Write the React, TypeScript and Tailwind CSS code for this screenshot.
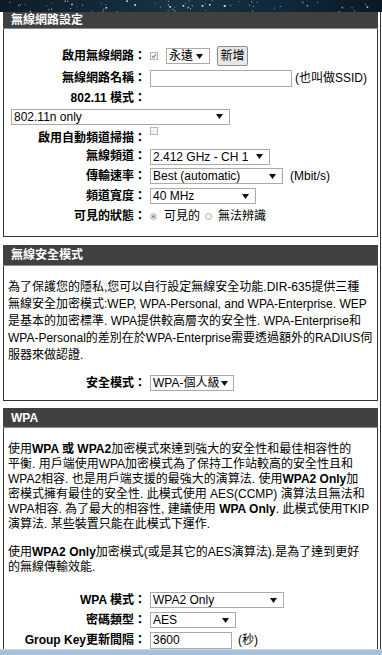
import React from "react";

function rand(seed: number) {
  let s = seed;
  return () => {
    s = (s * 9301 + 49297) % 233280;
    return s / 233280;
  };
}

function Banner() {
  const r = rand(7);
  const dots = Array.from({ length: 70 }, () => ({
    x: r() * 382,
    y: r() * 12,
    s: r() < 0.2 ? 1.6 : 0.9,
    o: 0.4 + r() * 0.6,
  }));
  return (
    <svg width="382" height="12" viewBox="0 0 382 12" className="block">
      <defs>
        <linearGradient id="sky" x1="0" x2="1" y1="0" y2="0">
          <stop offset="0" stopColor="#0c1c27" />
          <stop offset="0.45" stopColor="#173341" />
          <stop offset="0.75" stopColor="#10283a" />
          <stop offset="1" stopColor="#0b1822" />
        </linearGradient>
      </defs>
      <rect width="382" height="12" fill="url(#sky)" />
      {dots.map((d, i) => (
        <rect key={i} x={d.x} y={d.y} width={d.s} height={d.s} fill="#ffffff" opacity={d.o} />
      ))}
    </svg>
  );
}

function Arrow() {
  return (
    <svg width="7" height="5" viewBox="0 0 7 5" className="shrink-0">
      <path d="M0 0h7L3.5 5z" fill="#111" />
    </svg>
  );
}

function Select({
  className,
  tight,
  children,
}: {
  className: string;
  tight?: boolean;
  children: React.ReactNode;
}) {
  return (
    <div
      className={`flex h-[16px] items-center justify-between border border-[#a9a9a9] bg-white pl-[2px] text-[12px] leading-[14px] ${
        tight ? "pr-[5px]" : "pr-[6px]"
      } ${className}`}
    >
      <span className="whitespace-nowrap">{children}</span>
      <Arrow />
    </div>
  );
}

function Row({
  label,
  className,
  children,
}: {
  label: React.ReactNode;
  className: string;
  children?: React.ReactNode;
}) {
  return (
    <div className={`flex items-center ${className}`}>
      <div className="w-[142px] shrink-0 whitespace-nowrap text-right text-[12px] font-bold leading-[15px]">{label}</div>
      <div className="ml-[4px] flex items-center text-[12px] leading-[15px]">{children}</div>
    </div>
  );
}

function Header({ className, children }: { className: string; children: React.ReactNode }) {
  return (
    <div
      className={`flex items-center border-b border-[#8c8c8c] bg-[#404040] pl-[8px] text-[12px] font-bold text-white ${className}`}
    >
      <span className="whitespace-nowrap leading-[12px]">{children}</span>
    </div>
  );
}

function Line({ children }: { children: React.ReactNode }) {
  return <div className="whitespace-nowrap text-[12px] leading-[15px]">{children}</div>;
}

function Line17({ children }: { children: React.ReactNode }) {
  return <div className="whitespace-nowrap text-[12px] leading-[17px]">{children}</div>;
}

function Checkbox({ checked }: { checked?: boolean }) {
  return (
    <span className="flex h-[8px] w-[8px] items-center justify-center border border-[#b8b8b8] bg-[#f3f3f3]">
      {checked && (
        <svg width="6" height="6" viewBox="0 0 6 6">
          <path d="M1 3.2L2.4 4.6L5 1.4" stroke="#8a8a8a" strokeWidth="1.2" fill="none" />
        </svg>
      )}
    </span>
  );
}

function Radio({ checked }: { checked?: boolean }) {
  return (
    <span className="flex h-[7px] w-[7px] items-center justify-center rounded-full border border-[#b0b0b0] bg-[#f3f3f3]">
      {checked && <span className="h-[3px] w-[3px] rounded-full bg-[#8a8a8a]" />}
    </span>
  );
}

export default function App() {
  return (
    <div className="relative h-[655px] w-[382px] overflow-hidden bg-white font-['Liberation_Sans','Noto_Sans_CJK_TC',sans-serif] text-black">
      <Banner />
      <div className="flex">
        <div className="ml-[3px] w-[375px] shrink-0">
          {/* Section 1 */}
          <Header className="h-[17px]">無線網路設定</Header>
          <div className="border-x border-b border-[#333] pt-[15px] pb-[9px]">
            <Row label="啟用無線網路：" className="h-[24px]">
              <Checkbox checked />
              <Select className="ml-[8px] w-[44px]">永遠</Select>
              <button className="ml-[7px] flex h-[20px] w-[31px] items-center justify-center rounded-[2px] border border-[#8f8f8f] bg-[#e6e6e6] text-[12px] leading-[14px]">
                新增
              </button>
            </Row>
            <Row label="無線網路名稱：" className="h-[21px]">
              <div className="h-[17px] w-[142px] border border-[#a9a9a9] bg-white" />
              <span className="ml-[3px] whitespace-nowrap">(也叫做SSID)</span>
            </Row>
            <Row label="802.11 模式：" className="h-[18px]" />
            <div className="flex h-[19px] items-center pl-[7px]">
              <Select className="w-[219px]">802.11n only</Select>
            </div>
            <div className="flex h-[21px] items-start">
              <div className="flex h-[21px] w-[142px] shrink-0 items-end justify-end whitespace-nowrap pb-[1px] text-right text-[12px] font-bold leading-[15px]">
                啟用自動頻道掃描：
              </div>
              <div className="ml-[4px] pt-[1px]">
                <Checkbox />
              </div>
            </div>
            <Row label="無線頻道：" className="h-[19px]">
              <Select className="w-[120px]">2.412 GHz - CH 1</Select>
            </Row>
            <Row label="傳輸速率：" className="h-[20px]">
              <Select className="w-[133px]">Best (automatic)</Select>
              <span className="ml-[7px] whitespace-nowrap">(Mbit/s)</span>
            </Row>
            <Row label="頻道寬度：" className="h-[20px]">
              <Select className="w-[106px]">40 MHz</Select>
            </Row>
            <Row label="可見的狀態：" className="h-[21px]">
              <Radio checked />
              <span className="ml-[7px] whitespace-nowrap">可見的</span>
              <span className="ml-[5px]">
                <Radio />
              </span>
              <span className="ml-[6px] whitespace-nowrap">無法辨識</span>
            </Row>
          </div>

          {/* Section 2 */}
          <Header className="mt-[8px] h-[21px]">無線安全模式</Header>
          <div className="border-x border-b border-[#333] pt-[13px] pb-[7px]">
            <div className="pl-[4px]">
              <Line17>為了保護您的隱私,您可以自行設定無線安全功能.DIR-635提供三種</Line17>
              <Line17>無線安全加密模式:WEP, WPA-Personal, and WPA-Enterprise. WEP</Line17>
              <Line17>是基本的加密標準. WPA提供較高層次的安全性. WPA-Enterprise和</Line17>
              <Line17>WPA-Personal的差別在於WPA-Enterprise需要透過額外的RADIUS伺</Line17>
              <Line17>服器來做認證.</Line17>
            </div>
            <Row label="安全模式：" className="mt-[9px] h-[20px]">
              <Select className="w-[84px]" tight>
                WPA-個人級
              </Select>
            </Row>
          </div>

          {/* Section 3 */}
          <Header className="mt-[7px] h-[20px]">WPA</Header>
          <div className="border-x border-b border-[#333] pt-[14px] pb-[10px]">
            <div className="pl-[4px]">
              <Line>
                使用<b>WPA 或 WPA2</b>加密模式來達到強大的安全性和最佳相容性的
              </Line>
              <Line>平衡. 用戶端使用WPA加密模式為了保持工作站較高的安全性且和</Line>
              <Line>
                WPA2相容. 也是用戶端支援的最強大的演算法. 使用<b>WPA2 Only</b>加
              </Line>
              <Line>密模式擁有最佳的安全性. 此模式使用 AES(CCMP) 演算法且無法和</Line>
              <Line>
                WPA相容. 為了最大的相容性, 建議使用 <b>WPA Only</b>. 此模式使用TKIP
              </Line>
              <Line>演算法. 某些裝置只能在此模式下運作.</Line>
              <div className="h-[13px]" />
              <Line>
                使用<b>WPA2 Only</b>加密模式(或是其它的AES演算法).是為了達到更好
              </Line>
              <Line>的無線傳輸效能.</Line>
            </div>
            <Row label="WPA 模式：" className="mt-[15px] h-[20px]">
              <Select className="w-[134px]">WPA2 Only</Select>
            </Row>
            <Row label="密碼類型：" className="h-[20px]">
              <Select className="w-[86px]">AES</Select>
            </Row>
            <Row label="Group Key更新間隔：" className="h-[20px]">
              <div className="flex h-[17px] w-[82px] items-center border border-[#a9a9a9] bg-white pl-[2px] text-[12px]">
                3600
              </div>
              <span className="ml-[6px] whitespace-nowrap">(秒)</span>
            </Row>
          </div>
        </div>
        <div className="ml-[2px] w-px shrink-0 self-stretch bg-[#333]" />
      </div>
      <div className="absolute bottom-0 left-0 right-0 h-[6px] border-t border-[#c8d8ea] bg-[#a7c1dc]" />
    </div>
  );
}
